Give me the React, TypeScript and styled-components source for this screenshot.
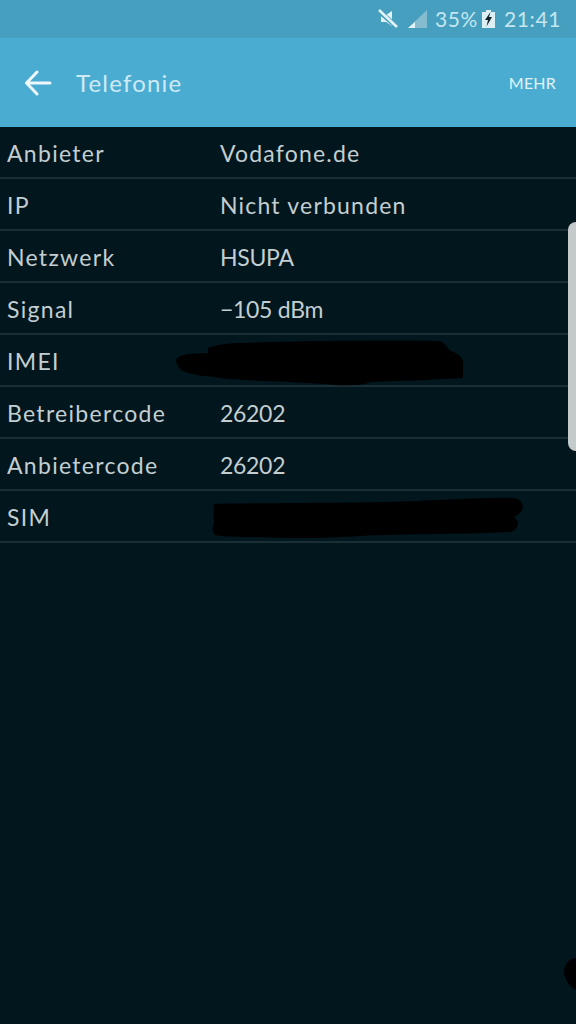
import styled, { createGlobalStyle } from "styled-components";

const GlobalStyle = createGlobalStyle`
  html, body {
    margin: 0;
    padding: 0;
    background: #02161e;
  }
`;

const Screen = styled.div`
  position: relative;
  width: 576px;
  height: 1024px;
  overflow: hidden;
  background: #02161e;
  font-family: "Lato", "Noto Sans", sans-serif;
`;

const StatusBar = styled.div`
  display: flex;
  align-items: center;
  justify-content: flex-end;
  height: 38px;
  padding-right: 15px;
  background: #479fbf;
  color: #c4e6f0;
  font-size: 21px;
`;

const StatusText = styled.span<{ $gap: number }>`
  margin-left: ${(p) => p.$gap}px;
  line-height: 38px;
  letter-spacing: 0.6px;
`;

const StatusIcon = styled.svg<{ $gap?: number }>`
  display: block;
  margin-left: ${(p) => p.$gap ?? 0}px;
`;

const AppBar = styled.div`
  display: flex;
  align-items: center;
  height: 89px;
  padding: 0 20px 0 24px;
  background: #4bacd2;
`;

const BackIcon = styled.svg`
  display: block;
  margin-right: 24px;
`;

const Title = styled.div`
  flex: 1;
  color: #cdeaf4;
  font-size: 24px;
  letter-spacing: 1.2px;
`;

const More = styled.div`
  color: #e0f3f9;
  font-size: 16px;
  letter-spacing: 0.2px;
`;

const List = styled.div`
  display: flex;
  flex-direction: column;
`;

const Row = styled.div`
  display: flex;
  align-items: center;
  height: 48px;
  padding-top: 2px;
  border-bottom: 2px solid #1a2e36;
  color: #c3ced0;
  font-size: 23px;
`;

const Label = styled.div`
  width: 220px;
  padding-left: 7px;
  box-sizing: border-box;
  letter-spacing: 1.3px;
`;

const Value = styled.div<{ $tight?: boolean }>`
  flex: 1;
  letter-spacing: ${(p) => (p.$tight ? "-0.3px" : "1.2px")};
`;

const ScrollHandle = styled.div`
  position: absolute;
  top: 222px;
  right: 0;
  width: 8px;
  height: 229px;
  background: #c4c9ca;
  border-radius: 8px 0 0 8px;
`;

const Scribble = styled.svg`
  position: absolute;
  top: 0;
  left: 0;
  pointer-events: none;
`;

const rows: { label: string; value: string; tight?: boolean }[] = [
  { label: "Anbieter", value: "Vodafone.de" },
  { label: "IP", value: "Nicht verbunden" },
  { label: "Netzwerk", value: "HSUPA", tight: true },
  { label: "Signal", value: "−105 dBm", tight: true },
  { label: "IMEI", value: "" },
  { label: "Betreibercode", value: "26202", tight: true },
  { label: "Anbietercode", value: "26202", tight: true },
  { label: "SIM", value: "" },
];

export default function App() {
  return (
    <Screen>
      <GlobalStyle />
      <StatusBar>
        <StatusIcon width="21" height="20" viewBox="0 0 21 20">
          <path d="M3 6h5l6-4v15l-6-4H3z" fill="#e4f3f7" />
          <path d="M1 2l18 16" stroke="#479fbf" strokeWidth="5" />
          <path d="M1 1l18 17" stroke="#e4f3f7" strokeWidth="2.5" />
        </StatusIcon>
        <StatusIcon width="20" height="20" viewBox="0 0 20 20" $gap={9}>
          <path d="M0 19L19 1v18z" fill="#85bccf" />
          <path d="M0 19l7-6v6z" fill="#e4f3f7" />
        </StatusIcon>
        <StatusText $gap={7}>35%</StatusText>
        <StatusIcon width="13" height="18" viewBox="0 0 13 18" $gap={4}>
          <path d="M4 0h5v2h4v16H0V2h4z" fill="#dceff4" />
          <path d="M8.500 2L3 10h3l-1.500 6.500L10 7H7z" fill="#11222a" />
        </StatusIcon>
        <StatusText $gap={9}>21:41</StatusText>
      </StatusBar>
      <AppBar>
        <BackIcon width="28" height="26" viewBox="0 0 28 26">
          <path
            d="M26 13H3M13 2L2.500 13 13 24"
            fill="none"
            stroke="#eef8fb"
            strokeWidth="3"
            strokeLinecap="round"
            strokeLinejoin="round"
          />
        </BackIcon>
        <Title>Telefonie</Title>
        <More>MEHR</More>
      </AppBar>
      <List>
        {rows.map((row) => (
          <Row key={row.label}>
            <Label>{row.label}</Label>
            <Value $tight={row.tight}>{row.value}</Value>
          </Row>
        ))}
      </List>
      <ScrollHandle />
      <Scribble width="576" height="1024" viewBox="0 0 576 1024">
        {/* hand-drawn redactions over IMEI and SIM */}
        <path
          d="M176 360c1-3 6-5 12-6l20-1v-5c10-4 24-5 34-5 60-2 140-3 198-2 6 3 8 6 9 9 8 3 14 7 14 12v16c-30 2-70 3-92 4-8 4-30 4-46 2-40-3-90-3-111-7-12-1-26-3-33-7-3-3-5-7-5-10z"
          fill="#000"
        />
        <path
          d="M214 504c40-1 120-1 170-2 50-1 100-5 130-4 8 1 10 8 8 12-2 4-6 6-8 7 6 3 5 12-3 15-40 2-110 2-150 4-30 2-70 3-100 1-20 0-40 0-46-2-3-3-3-8-1-11 0-2-1-6 0-20z"
          fill="#000"
        />
        <path d="M576 958c-6 0-11 5-12 12 0 8 4 16 12 20z" fill="#000" />
      </Scribble>
    </Screen>
  );
}
